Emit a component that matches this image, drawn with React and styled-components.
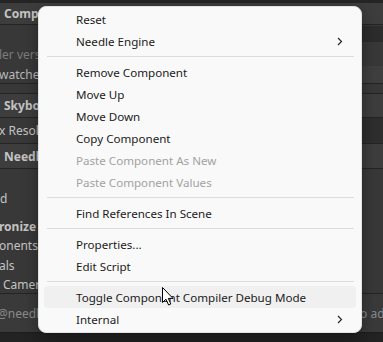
import React from "react";
import styled, { createGlobalStyle } from "styled-components";

const Global = createGlobalStyle`
  html, body { margin: 0; padding: 0; background: #383838; }
  body { width: 383px; height: 342px; overflow: hidden; }
`;

const Stage = styled.div`
  position: relative;
  width: 383px;
  height: 342px;
  overflow: hidden;
  background: #383838;
  font-family: "Noto Sans", "Liberation Sans", sans-serif;
`;

const Inspector = styled.div`
  display: flex;
  flex-direction: column;
  width: 383px;
  height: 342px;
`;

const TopStrip = styled.div`
  height: 3px;
  background: #252525;
  flex: none;
`;

const Row = styled.div`
  flex: none;
  height: ${(p) => p.$h}px;
  display: flex;
  align-items: center;
  justify-content: space-between;
  box-sizing: border-box;
  background: ${(p) => (p.$header ? "#3d3d3d" : p.$bg || "#383838")};
  border-bottom: ${(p) => (p.$line ? "1px solid #242424" : "none")};
  overflow: hidden;
  white-space: nowrap;
`;

const Label = styled.span`
  font-size: 12px;
  font-weight: ${(p) => (p.$bold ? 700 : 400)};
  color: ${(p) => p.$color || "#c4c4c4"};
  padding-left: ${(p) => p.$pad || 0}px;
  margin-left: ${(p) => p.$shift || 0}px;
  margin-right: ${(p) => p.$rshift || 0}px;
`;

const Field = styled.div`
  height: ${(p) => p.$fh}px;
  width: 30px;
  background: ${(p) => p.$bg};
  flex: none;
`;

const BottomBar = styled.div`
  flex: 1;
  background: #232323;
  border-top: 1px solid #1c1c1c;
`;

const Menu = styled.div`
  position: absolute;
  left: 38px;
  top: 6px;
  width: 324px;
  height: 327px;
  box-sizing: border-box;
  background: #f9f9f9;
  border: 1px solid #e2e2e2;
  border-radius: 8px;
  box-shadow: 0 6px 16px rgba(0, 0, 0, 0.35);
  padding: 1px 5px 2px;
  display: flex;
  flex-direction: column;
  font-family: "Noto Sans", "Liberation Sans", sans-serif;
`;

const Item = styled.div`
  height: 22px;
  flex: none;
  display: flex;
  align-items: center;
  justify-content: space-between;
  padding: 0 13px 0 32px;
  border-radius: 4px;
  font-size: 11.6px;
  color: ${(p) => (p.$disabled ? "#a2a2a2" : "#1b1b1b")};
  background: ${(p) => (p.$hover ? "#f0f0f0" : "transparent")};
`;

const Sep = styled.div`
  height: 9px;
  flex: none;
  display: flex;
  align-items: center;
  padding: 0 2px 0 3px;
  &::after {
    content: "";
    display: block;
    flex: 1;
    height: 1px;
    background: #dcdcdc;
  }
`;

const Chevron = () => (
  <svg width="6" height="9" viewBox="0 0 6 9">
    <path d="M1 1 L4.5 4.5 L1 8" fill="none" stroke="#262626" strokeWidth="1.2" />
  </svg>
);

const Cursor = styled.svg`
  position: absolute;
  left: 162px;
  top: 287px;
`;

const items = [
  { t: "Reset" },
  { t: "Needle Engine", sub: true },
  "sep",
  { t: "Remove Component" },
  { t: "Move Up" },
  { t: "Move Down" },
  { t: "Copy Component" },
  { t: "Paste Component As New", dis: true },
  { t: "Paste Component Values", dis: true },
  "sep",
  { t: "Find References In Scene" },
  "sep",
  { t: "Properties..." },
  { t: "Edit Script" },
  "sep",
  { t: "Toggle Component Compiler Debug Mode", hover: true },
  { t: "Internal", sub: true },
];

export default function App() {
  return (
    <Stage>
      <Global />
      <Inspector>
        <TopStrip />
        <Row $h={22} $header $line>
          <Label $bold $pad={4}>Comp</Label>
        </Row>
        <Row $h={18}>
          <span />
          <Field $bg="#2c2c2c" $fh={16} />
        </Row>
        <Row $h={22}>
          <Label $color="#7c7c7c" $shift={-1}>ler version</Label>
        </Row>
        <Row $h={19} $line>
          <Label $color="#b8b8b8" $shift={-1}>watcher i</Label>
          <Field $bg="#3f3f3f" $fh={17} />
        </Row>
        <Row $h={10} $line />
        <Row $h={24} $header $line>
          <Label $bold $pad={4}>Skybox</Label>
        </Row>
        <Row $h={26} $line>
          <Label $shift={-1}>x Resolution</Label>
          <Field $bg="#2e2e2e" $fh={25} />
        </Row>
        <Row $h={25} $header $line>
          <Label $bold $pad={4}>Needle</Label>
        </Row>
        <Row $h={18} />
        <Row $h={22}>
          <Label>d</Label>
        </Row>
        <Row $h={8} />
        <Row $h={18}>
          <Label $bold $shift={-1}>ronize</Label>
        </Row>
        <Row $h={20}>
          <Label $shift={-1}>onents</Label>
        </Row>
        <Row $h={20}>
          <Label $shift={-1}>als</Label>
        </Row>
        <Row $h={19} $line>
          <Label $pad={3}>Camera</Label>
        </Row>
        <Row $h={38} $bg="#3a3a3a">
          <Label $color="#8a8a8a" $shift={-3}>@needle</Label>
          <Label $color="#8a8a8a" $rshift={-9}>to add</Label>
        </Row>
        <BottomBar />
      </Inspector>

      <Menu>
        {items.map((it, i) =>
          it === "sep" ? (
            <Sep key={i} />
          ) : (
            <Item key={i} $disabled={it.dis} $hover={it.hover}>
              <span>{it.t}</span>
              {it.sub && <Chevron />}
            </Item>
          )
        )}
      </Menu>

      <Cursor width="12" height="19" viewBox="0 0 12 19">
        <path d="M0.5 0.5 L0.5 15.5 L4 12.2 L6.6 18 L8.8 17 L6.3 11.4 L11 11.4 Z" fill="#ffffff" stroke="#000000" strokeWidth="1" strokeLinejoin="round" />
      </Cursor>
    </Stage>
  );
}
